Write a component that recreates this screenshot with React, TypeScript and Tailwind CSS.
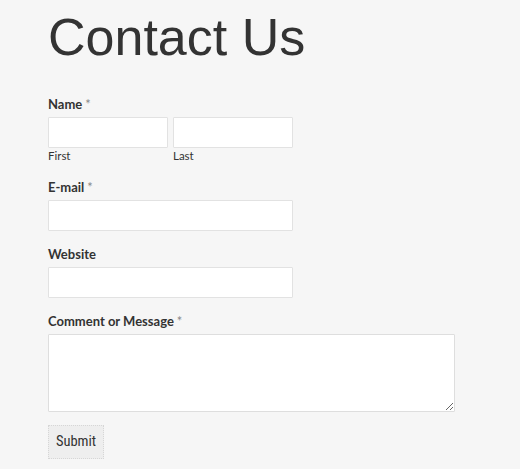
export default function App() {
  const label = 'block text-[13px] font-bold text-[#333] leading-[14px]'
  const input = 'block h-[31px] bg-white border border-[#e2e2e2] rounded-[1px]'
  const star = 'font-normal text-[#888] ml-[3px]'

  return (
    <div className="min-h-screen bg-[#f6f6f6] pl-[48px] pt-[7px]" style={{ fontFamily: 'Lato, "Open Sans", sans-serif' }}>
      <h1 className="text-[52px] leading-[60px] text-[#333]" style={{ fontFamily: '"Liberation Sans", Arial, sans-serif' }}>
        Contact Us
      </h1>

      <form className="mt-[30px] flex flex-col">
        <div>
          <label className={label}>
            Name<span className={star}>*</span>
          </label>
          <div className="mt-[6px] flex gap-[5px]">
            <div>
              <input className={`${input} w-[120px]`} />
              <span className="block mt-[1px] text-[11.5px] leading-[14px] text-[#333]">First</span>
            </div>
            <div>
              <input className={`${input} w-[120px]`} />
              <span className="block mt-[1px] text-[11.5px] leading-[14px] text-[#333]">Last</span>
            </div>
          </div>
        </div>

        <div className="mt-[17px]">
          <label className={label}>
            E-mail<span className={star}>*</span>
          </label>
          <input className={`${input} mt-[6px] w-[245px]`} />
        </div>

        <div className="mt-[16px]">
          <label className={label}>Website</label>
          <input className={`${input} mt-[6px] w-[245px]`} />
        </div>

        <div className="mt-[16px]">
          <label className={label}>
            Comment or Message<span className={star}>*</span>
          </label>
          <textarea className="block mt-[6px] w-[407px] h-[78px] bg-white border border-[#dedede] rounded-[1px] resize" />
        </div>

        <div className="mt-[13px]">
          <button
            type="button"
            className="h-[34px] w-[56px] bg-[#eeeeee] border border-dotted border-[#d6d6d6] text-[14.5px] text-[#333]"
            style={{ fontFamily: '"Liberation Sans Narrow", "Roboto Condensed", Roboto, sans-serif' }}
          >
            Submit
          </button>
        </div>
      </form>
    </div>
  )
}
